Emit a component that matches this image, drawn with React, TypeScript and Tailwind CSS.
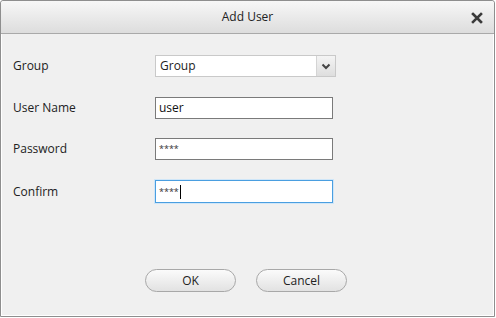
import React from "react";

const font = { fontFamily: '"Open Sans", "Noto Sans", sans-serif' };

function Row({ label, children, className = "" }: { label: string; children: React.ReactNode; className?: string }) {
  return (
    <div className={`flex items-center ${className}`}>
      <div className="w-[142px] text-[12px] text-[#222]">{label}</div>
      {children}
    </div>
  );
}

export default function App() {
  return (
    <div className="w-[496px] h-[318px] bg-white" style={font}>
      <div className="w-[495px] h-[317px] border border-[#8e8e8e] rounded-t-[3px] flex flex-col bg-[#f0f0f0] shadow-[inset_0_0_0_1px_#ffffff]">
        {/* title */}
        <div className="relative h-[33px] flex items-center justify-center bg-gradient-to-b from-[#f7f7f7] to-[#dddddd] border-b border-[#a9a9a9] rounded-t-[3px]">
          <span className="text-[12px] text-[#222]">Add User</span>
          <svg className="absolute right-[11px] top-[11px]" width="12" height="12" viewBox="0 0 12 12">
            <path d="M2 2 L10 10 M10 2 L2 10" stroke="#3a3a3a" strokeWidth="2.6" strokeLinecap="square" />
          </svg>
        </div>

        {/* body */}
        <div className="flex-1 flex flex-col pl-[12px] pt-[21px]">
          <Row label="Group">
            <div className="w-[181px] h-[22px] flex bg-white border border-[#c9c9c9]">
              <span className="flex-1 pl-[4px] text-[12px] leading-[20px] text-[#222]">Group</span>
              <div className="w-[19px] h-full border-l border-[#d4d4d4] bg-gradient-to-b from-[#f4f4f4] to-[#dedede] flex items-center justify-center">
                <svg width="10" height="7" viewBox="0 0 10 7">
                  <path d="M1.5 1.5 L5 5 L8.5 1.5" fill="none" stroke="#444" strokeWidth="2" />
                </svg>
              </div>
            </div>
          </Row>
          <Row label="User Name" className="mt-[20px]">
            <div className="w-[178px] h-[22px] bg-white border border-[#7a7a7a] pl-[3px] text-[12px] leading-[20px] text-[#111]">
              user
            </div>
          </Row>
          <Row label="Password" className="mt-[19px]">
            <div className="w-[178px] h-[22px] bg-white border border-[#7a7a7a] pl-[3px] text-[9px] leading-[20px] text-[#333]">
              ****
            </div>
          </Row>
          <Row label="Confirm" className="mt-[20px]">
            <div className="w-[178px] h-[23px] bg-white border border-[#4a9ee0] shadow-[0_0_0_1px_#cfe6f8] pl-[3px] text-[9px] leading-[21px] text-[#333] flex items-center">
              <span>****</span>
              <span className="w-px h-[14px] bg-black ml-px" />
            </div>
          </Row>

          <div className="flex gap-[20px] ml-[132px] mt-[66px]">
            <button className="w-[91px] h-[23px] rounded-full border border-[#a8a8a8] bg-gradient-to-b from-[#fbfbfb] to-[#e2e2e2] text-[12px] text-[#222]">
              OK
            </button>
            <button className="w-[91px] h-[23px] rounded-full border border-[#a8a8a8] bg-gradient-to-b from-[#fbfbfb] to-[#e2e2e2] text-[12px] text-[#222]">
              Cancel
            </button>
          </div>
        </div>
      </div>
    </div>
  );
}
